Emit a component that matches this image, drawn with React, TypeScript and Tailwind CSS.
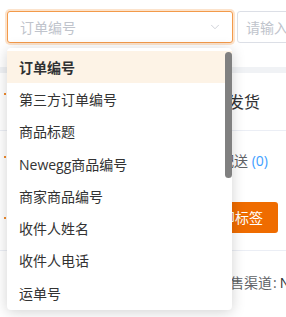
import { ChevronDown } from "lucide-react";

const options = [
  "订单编号",
  "第三方订单编号",
  "商品标题",
  "Newegg商品编号",
  "商家商品编号",
  "收件人姓名",
  "收件人电话",
  "运单号",
];

export default function App() {
  const font = { fontFamily: '"Open Sans", "Noto Sans CJK SC", sans-serif' };
  return (
    <div className="relative w-[286px] h-[317px] overflow-hidden bg-white text-[14px]" style={font}>
      {/* filter row */}
      <div className="flex gap-[4px] pl-[7px] pt-[11px]">
        <div className="w-[226px] h-[32px] shrink-0 flex items-center justify-between pl-[12px] pr-[10px] border border-[#f39a4a] rounded-[3px] ring-2 ring-[#fce3cc] bg-white">
          <span className="text-[#c0c4cc]">订单编号</span>
          <ChevronDown className="w-[14px] h-[14px] text-[#c0c4cc]" strokeWidth={1.3} />
        </div>
        <div className="w-[120px] h-[32px] shrink-0 flex items-center pl-[8px] border border-[#dcdfe6] rounded-[3px]">
          <span className="text-[#c0c4cc] whitespace-nowrap">请输入订单编号</span>
        </div>
      </div>

      <div className="mt-[24px] h-[6px] bg-[#f0f2f5]" />

      {/* tabs */}
      <div className="h-[58px] flex items-center justify-between pl-[4px] pr-[26px] border-b border-[#ebeef5]">
        <span className="w-[2px] h-[2px] bg-[#f08a2c] -mt-[16px]" />
        <span className="text-[16px] text-[#303133] whitespace-nowrap">待发货</span>
      </div>

      <div className="h-[58px] flex items-center justify-between pl-[4px] pr-[18px]">
        <span className="w-[2px] h-[2px] bg-[#f08a2c] -mt-[6px]" />
        <span className="text-[#606266] whitespace-nowrap">
          待配送 <span className="text-[#409eff]">(0)</span>
        </span>
      </div>

      <div className="flex items-center justify-between pl-[4px] pr-[8px] pt-[13px] pb-[17px] border-b border-[#ebeef5]">
        <span className="w-[2px] h-[2px] bg-[#f08a2c]" />
        <div className="h-[31px] px-[15px] flex items-center rounded-[3px] bg-[#ef6c00] text-white whitespace-nowrap">
          打印标签
        </div>
      </div>

      <div className="pt-[21px] pl-[216px] text-[#606266] whitespace-nowrap">
        销售渠道<span className="ml-[1px] mr-[3px]">:</span>
        <span className="text-[#303133]">Newegg</span>
      </div>

      {/* dropdown */}
      <div className="absolute left-[7px] top-[48px] w-[225px] h-[262px] bg-white rounded-[4px] shadow-[0_2px_14px_0_rgba(0,0,0,0.18)] py-[3px] overflow-hidden">
        {options.map((o, i) => (
          <div
            key={o}
            className={
              i === 0
                ? "h-[32.3px] flex items-center px-[12px] bg-[#fdf3e6] font-bold text-[#303133]"
                : "h-[32.3px] flex items-center px-[12px] text-[#333333]"
            }
          >
            {o}
          </div>
        ))}
        <div className="absolute right-0 top-[4px] w-[7px] h-[126px] rounded-full bg-[#808080]" />
      </div>
    </div>
  );
}
